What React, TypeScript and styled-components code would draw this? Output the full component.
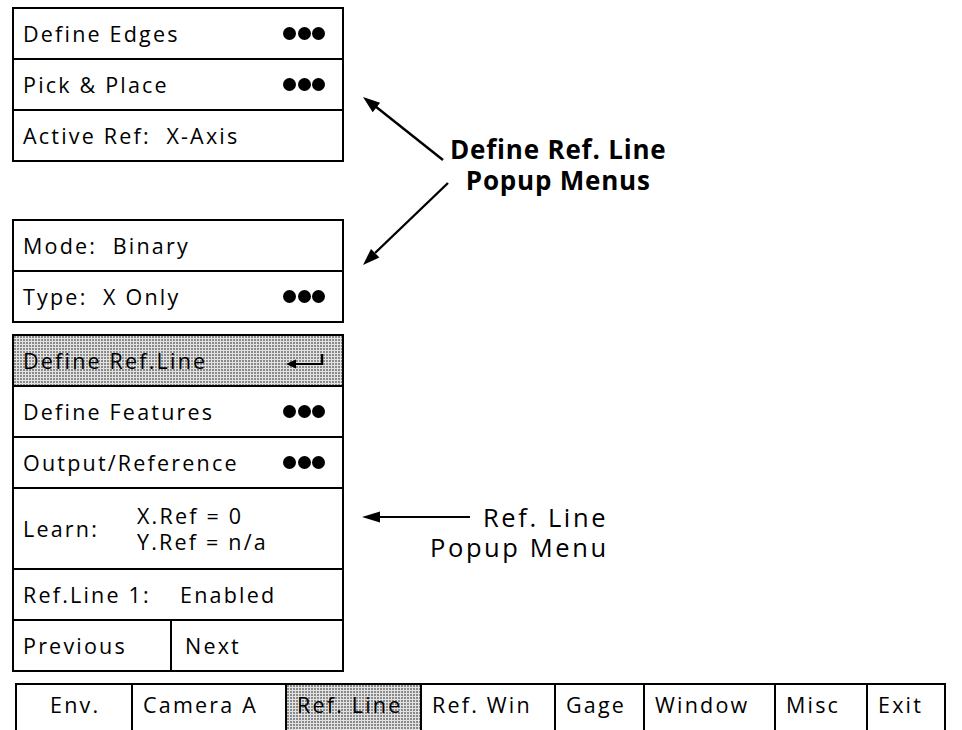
import React from 'react';
import styled, { createGlobalStyle, css } from 'styled-components';

const tabs = [
  { label: 'Env.', width: 116, indent: 33 },
  { label: 'Camera A', width: 154 },
  { label: 'Ref. Line', width: 135, active: true },
  { label: 'Ref. Win', width: 134 },
  { label: 'Gage', width: 89 },
  { label: 'Window', width: 131 },
  { label: 'Misc', width: 92 },
  { label: 'Exit', width: 78 },
];

function MoreDots() {
  return (
    <Dots>
      <Dot />
      <Dot />
      <Dot />
    </Dots>
  );
}

function ReturnKey() {
  return (
    <svg width="40" height="18" viewBox="0 0 40 18">
      <polygon points="1,12 11,7.5 11,16.5" fill="#000" />
      <line x1="10" y1="12" x2="37" y2="12" stroke="#000" strokeWidth="2" />
      <line x1="37" y1="2" x2="37" y2="13" stroke="#000" strokeWidth="2.4" />
    </svg>
  );
}

function App() {
  return (
    <Page>
      <GlobalStyle />
      <Top>
        <MenuColumn>
          <Menu $gap={0}>
            <Row>Define Edges<MoreDots /></Row>
            <Row>Pick &amp; Place<MoreDots /></Row>
            <Row>Active Ref:  X-Axis</Row>
          </Menu>

          <Menu $gap={57}>
            <Row>Mode:  Binary</Row>
            <Row>Type:  X Only<MoreDots /></Row>
          </Menu>

          <Menu $gap={11}>
            <Row $shaded>Define Ref.Line<ReturnKey /></Row>
            <Row>Define Features<MoreDots /></Row>
            <Row>Output/Reference<MoreDots /></Row>
            <Row $h={79}>
              <Field $w={114}>Learn:</Field>
              <Values>
                <span>X.Ref = 0</span>
                <span>Y.Ref = n/a</span>
              </Values>
              <Spacer />
            </Row>
            <Row>
              <Field $w={157}>Ref.Line 1:</Field>
              <Spacer>Enabled</Spacer>
            </Row>
            <Row $split>
              <PrevCell>Previous</PrevCell>
              <NextCell>Next</NextCell>
            </Row>
          </Menu>
        </MenuColumn>

        <Notes>
          <Callout $top={83}>
            <svg width="94" height="182" viewBox="0 0 94 182">
              <line x1="87" y1="70" x2="19" y2="16" stroke="#000" strokeWidth="2.4" />
              <polygon points="7,7 24.1,12.8 16.7,22.2" fill="#000" />
              <line x1="92" y1="93" x2="19" y2="163" stroke="#000" strokeWidth="2.4" />
              <polygon points="7,175 23.4,167.5 15,158.9" fill="#000" />
            </svg>
            <BoldNote>
              <span>Define Ref. Line</span>
              <span>Popup Menus</span>
            </BoldNote>
          </Callout>

          <Callout $top={230} $column>
            <NoteLine>
              <svg width="114" height="30" viewBox="0 0 114 30">
                <polygon points="6,15 24,9.5 24,20.5" fill="#000" />
                <line x1="22" y1="15" x2="114" y2="15" stroke="#000" strokeWidth="2" />
              </svg>
              <Note $indent={13}>Ref. Line</Note>
            </NoteLine>
            <NoteLine>
              <Note $indent={74}>Popup Menu</Note>
            </NoteLine>
          </Callout>
        </Notes>
      </Top>

      <TabBar>
        {tabs.map((tab) => (
          <Tab key={tab.label} $w={tab.width} $indent={tab.indent ?? 10} $active={tab.active}>
            {tab.label}
          </Tab>
        ))}
      </TabBar>
    </Page>
  );
}

const GlobalStyle = createGlobalStyle`
  html, body {
    margin:0;
    padding:0;
    background:#fff;
    overflow:hidden;
  }
  body {
    font-family:"Open Sans", "Liberation Sans", sans-serif;
    color:#000;
  }
`;

const dither = css`
  background-color:#e2e2e2;
  background-image:radial-gradient(circle at 1px 1px, #8a8a8a 0.8px, transparent 1.1px);
  background-size:3px 3px;
`;

const Page = styled.div`
  display:flex;
  flex-direction:column;
  padding:7px 0 0 12px;
`;
const Top = styled.div`
  display:flex;
  gap:12px;
`;
const MenuColumn = styled.div`
  width:332px;
  display:flex;
  flex-direction:column;
`;
const Menu = styled.div<{ $gap: number }>`
  margin-top:${(p) => p.$gap}px;
  border:2px solid #000;
`;
const Row = styled.div<{ $h?: number; $shaded?: boolean; $split?: boolean }>`
  height:${(p) => p.$h ?? 49}px;
  display:flex;
  align-items:${(p) => (p.$split ? 'stretch' : 'center')};
  justify-content:space-between;
  padding:${(p) => (p.$split ? '0' : '0 17px 0 9px')};
  font-size:21.5px;
  letter-spacing:2.2px;
  white-space:pre;
  ${(p) => p.$shaded && dither}
  & + & {
    border-top:2px solid #000;
  }
`;
const Field = styled.span<{ $w: number }>`
  width:${(p) => p.$w}px;
  flex:none;
`;
const Values = styled.div`
  display:flex;
  flex-direction:column;
  line-height:26px;
`;
const Spacer = styled.span`
  flex:1;
`;
const PrevCell = styled.div`
  width:158px;
  display:flex;
  align-items:center;
  padding-left:9px;
  box-sizing:border-box;
  border-right:2px solid #000;
`;
const NextCell = styled.div`
  flex:1;
  display:flex;
  align-items:center;
  padding-left:13px;
`;
const Dots = styled.span`
  display:flex;
  gap:1.5px;
`;
const Dot = styled.span`
  width:13px;
  height:13px;
  border-radius:50%;
  background:#000;
`;

const Notes = styled.div`
  display:flex;
  flex-direction:column;
`;
const Callout = styled.div<{ $top: number; $column?: boolean }>`
  display:flex;
  flex-direction:${(p) => (p.$column ? 'column' : 'row')};
  margin-top:${(p) => p.$top}px;
`;
const BoldNote = styled.div`
  display:flex;
  flex-direction:column;
  align-items:center;
  margin-top:44px;
  font-size:26px;
  font-weight:700;
  line-height:31px;
  letter-spacing:0.8px;
`;
const NoteLine = styled.div`
  display:flex;
  align-items:center;
  height:30px;
`;
const Note = styled.span<{ $indent: number }>`
  margin-left:${(p) => p.$indent}px;
  font-size:25.5px;
  line-height:30px;
  letter-spacing:2.6px;
`;

const TabBar = styled.div`
  display:flex;
  align-self:flex-start;
  height:48px;
  margin:11px 0 0 3px;
  border-top:2px solid #000;
  border-left:2px solid #000;
`;
const Tab = styled.div<{ $w: number; $indent: number; $active?: boolean }>`
  width:${(p) => p.$w}px;
  box-sizing:border-box;
  padding:6px 0 0 ${(p) => p.$indent}px;
  border-right:2px solid #000;
  font-size:21.5px;
  line-height:28px;
  letter-spacing:2.2px;
  white-space:nowrap;
  ${(p) => p.$active && dither}
`;

export default App;
